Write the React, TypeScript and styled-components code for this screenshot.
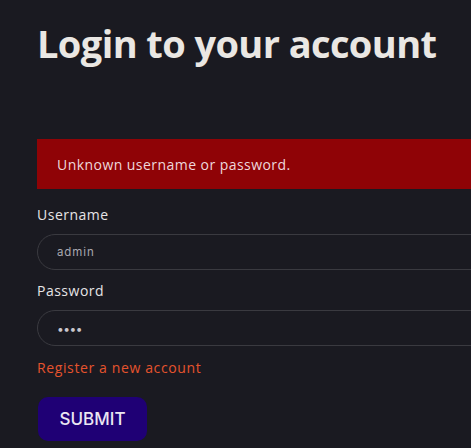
import React from "react";
import styled, { createGlobalStyle } from "styled-components";

const Global = createGlobalStyle`
  html, body {
    margin: 0;
    padding: 0;
    background: #1a1a21;
    overflow: hidden;
  }
  * { box-sizing: border-box; }
`;

const Page = styled.main`
  min-height: 448px;
  padding: 20px 0 0 37px;
  font-family: "Open Sans", "Noto Sans", sans-serif;
  color: #e9e6e4;
`;

const Title = styled.h1`
  margin: 0;
  font-size: 38px;
  line-height: 46px;
  font-weight: 700;
  letter-spacing: -0.6px;
  color: #eae7e3;
  white-space: nowrap;
`;

const Form = styled.form`
  width: 520px;
  display: flex;
  flex-direction: column;
  align-items: flex-start;
  margin-top: 73px;
`;

const ErrorBox = styled.div`
  align-self: stretch;
  height: 50px;
  display: flex;
  align-items: center;
  padding: 0 20px;
  background: #8f0306;
  color: #eed7dc;
  font-size: 14px;
  letter-spacing: 0.45px;
`;

const Label = styled.label<{ $top: number }>`
  margin-top: ${(p) => p.$top}px;
  font-size: 14px;
  line-height: 21px;
  letter-spacing: 0.5px;
  color: #e6e4e6;
`;

const Input = styled.input`
  align-self: stretch;
  margin-top: 9px;
  height: 36px;
  border: 1px solid #3a3a40;
  border-radius: 18px;
  background: transparent;
  padding: 0 19px;
  font-family: "Inter", "Open Sans", sans-serif;
  font-size: 11.5px;
  letter-spacing: 0.9px;
  color: #a9a8b0;
  outline: none;
`;

const PassInput = styled(Input)`
  font-size: 12px;
  color: #c9c6cc;
  letter-spacing: -0.5px;
`;

const RegisterLink = styled.a`
  margin-top: 11px;
  font-size: 14px;
  line-height: 21px;
  letter-spacing: 0.62px;
  color: #e5532d;
  text-decoration: none;
`;

const Submit = styled.button`
  margin-top: 19px;
  margin-left: 1px;
  width: 109px;
  height: 44px;
  border: none;
  border-radius: 10px;
  background: #1f0075;
  color: #ebe6f2;
  font-family: "Inter", "Open Sans", sans-serif;
  font-size: 17px;
  font-weight: 500;
  letter-spacing: 0px;
`;

export default function App() {
  return (
    <>
      <Global />
      <Page>
        <Title>Login to your account</Title>
        <Form onSubmit={(e) => e.preventDefault()}>
          <ErrorBox>Unknown username or password.</ErrorBox>
          <Label $top={15}>Username</Label>
          <Input type="text" defaultValue="admin" />
          <Label $top={10}>Password</Label>
          <PassInput type="password" defaultValue="abcd" />
          <RegisterLink href="#">Register a new account</RegisterLink>
          <Submit type="submit">SUBMIT</Submit>
        </Form>
      </Page>
    </>
  );
}
